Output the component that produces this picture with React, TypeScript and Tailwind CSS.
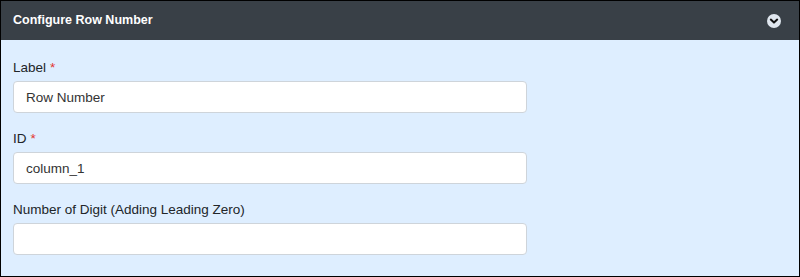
import React from 'react';

const Field: React.FC<{ label: string; required?: boolean; value?: string }> = ({ label, required, value }) => (
  <div className="flex flex-col">
    <label className="h-[19px] text-[13.5px] leading-[19px] text-[#212529]">
      {label}
      {required && <span className="ml-1 text-[#e3342f]">*</span>}
    </label>
    <input
      type="text"
      defaultValue={value}
      className="mt-[4px] h-[32px] w-[514px] rounded-[4px] border border-[#ced4da] bg-white px-3 text-[13.5px] text-[#333] outline-none"
    />
  </div>
);

export default function App() {
  return (
    <div className="h-[277px] w-[800px] border border-black bg-[#deeeff]" style={{ fontFamily: '"Liberation Sans", Arial, sans-serif' }}>
      <div className="flex h-[39px] items-center justify-between bg-[#394047] pl-3 pr-[18px]">
        <span className="text-[12.5px] font-bold text-white">Configure Row Number</span>
        <svg width="14" height="14" viewBox="0 0 14 14">
          <circle cx="7" cy="7" r="7" fill="#dfe6ee" />
          <path d="M3.8 5.6 L7 8.6 L10.2 5.6" fill="none" stroke="#111" strokeWidth="2" strokeLinecap="round" strokeLinejoin="round" />
        </svg>
      </div>
      <div className="flex flex-col gap-[16px] px-3 pt-[18px]">
        <Field label="Label" required value="Row Number" />
        <Field label="ID" required value="column_1" />
        <Field label="Number of Digit (Adding Leading Zero)" />
      </div>
    </div>
  );
}
